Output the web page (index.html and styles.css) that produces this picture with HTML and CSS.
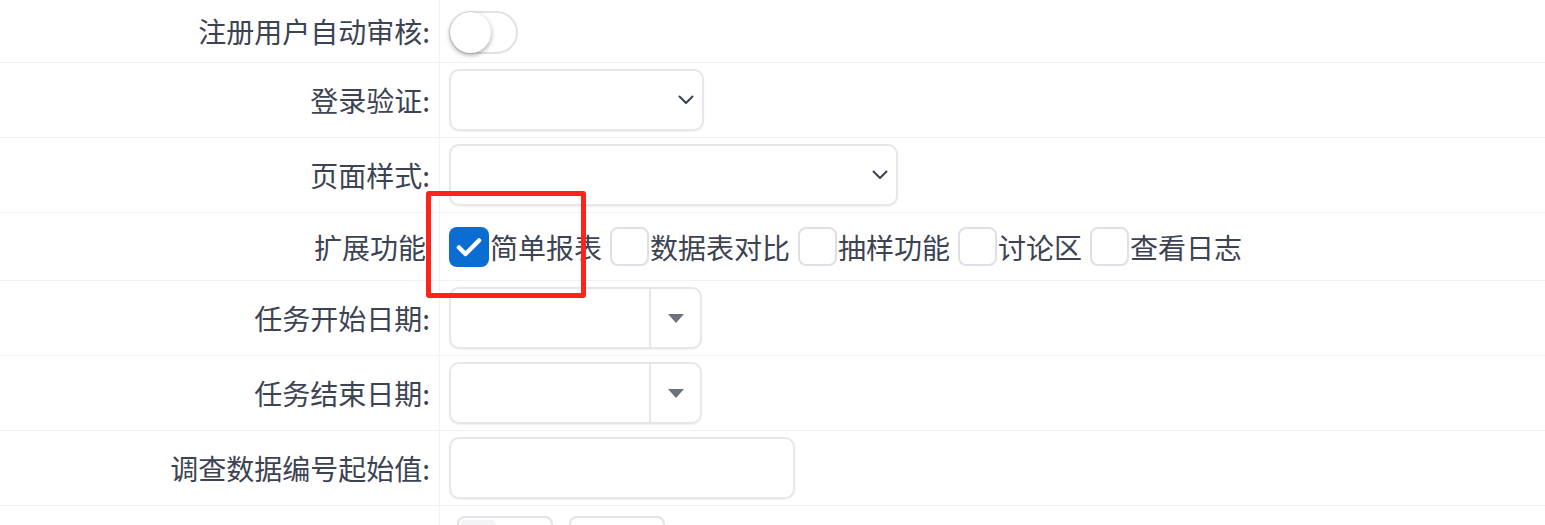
FILE: index.html
```html
<!DOCTYPE html>
<html lang="zh">
<head>
    <meta charset="UTF-8">
    <meta name="viewport" content="width=device-width, initial-scale=1.0">
    <title>设置</title>
    <link rel="stylesheet" href="styles.css">
</head>
<body>
    <div class="form">
        <div class="row row-first">
            <div class="label">注册用户自动审核:</div>
            <div class="field">
                <span class="switch"><span class="knob"></span></span>
            </div>
        </div>
        <div class="row">
            <div class="label">登录验证:</div>
            <div class="field">
                <div class="select select-sm">
                    <svg width="16" height="10" viewBox="0 0 16 10"><path d="M1.5 1.5 L8 8 L14.5 1.5" fill="none" stroke="#3a4150" stroke-width="2" stroke-linecap="round" stroke-linejoin="round"/></svg>
                </div>
            </div>
        </div>
        <div class="row">
            <div class="label">页面样式:</div>
            <div class="field">
                <div class="select select-lg">
                    <svg width="16" height="10" viewBox="0 0 16 10"><path d="M1.5 1.5 L8 8 L14.5 1.5" fill="none" stroke="#3a4150" stroke-width="2" stroke-linecap="round" stroke-linejoin="round"/></svg>
                </div>
            </div>
        </div>
        <div class="row row-check">
            <div class="label label-plain">扩展功能</div>
            <div class="field">
                <label class="check">
                    <span class="box is-checked">
                        <svg width="40" height="40" viewBox="0 0 40 40"><path d="M10 20.5 L16.5 27 L30 13.5" fill="none" stroke="#fff" stroke-width="4.5" stroke-linecap="round" stroke-linejoin="round"/></svg>
                    </span>简单报表
                </label>
                <label class="check"><span class="box"></span>数据表对比</label>
                <label class="check"><span class="box"></span>抽样功能</label>
                <label class="check"><span class="box"></span>讨论区</label>
                <label class="check"><span class="box"></span>查看日志</label>
            </div>
        </div>
        <div class="row">
            <div class="label">任务开始日期:</div>
            <div class="field">
                <div class="date">
                    <span class="date-text"></span>
                    <span class="date-btn"><span class="caret"></span></span>
                </div>
            </div>
        </div>
        <div class="row">
            <div class="label">任务结束日期:</div>
            <div class="field">
                <div class="date">
                    <span class="date-text"></span>
                    <span class="date-btn"><span class="caret"></span></span>
                </div>
            </div>
        </div>
        <div class="row">
            <div class="label">调查数据编号起始值:</div>
            <div class="field">
                <div class="text-input"></div>
            </div>
        </div>
        <div class="row row-last">
            <div class="label"></div>
            <div class="field">
                <span class="small-btn"><span class="swatch"></span></span>
                <span class="small-btn"></span>
            </div>
        </div>
    </div>
    <div class="mark"></div>
</body>
</html>
```

FILE: styles.css
```css
* {
    margin: 0;
    padding: 0;
    box-sizing: border-box;
}
body {
    background-color: #fff;
    font-family: "Noto Sans CJK SC", "Noto Sans", sans-serif;
    color: #3c4352;
    overflow: hidden;
}
.form {
    width: 100%;
}
.row {
    display: grid;
    grid-template-columns: 440px 1fr;
    border-bottom: 1px solid #f2f2f5;
}
.label {
    display: flex;
    align-items: center;
    justify-content: flex-end;
    padding-right: 9px;
    border-right: 1px solid #f2f2f5;
    font-size: 28px;
}
.label-plain {
    padding-right: 13px;
}
.field {
    display: flex;
    align-items: center;
    padding: 6px 9px;
    min-height: 74px;
}
.row-first .field {
    min-height: 62px;
    padding: 11px 9px 8px;
}
.row-check .field {
    min-height: 67px;
    padding: 0 9px;
}
.row-last .field {
    align-items: flex-start;
    padding: 10px 8px 0 17px;
    gap: 16px;
}

/* switch */
.switch {
    display: block;
    width: 69px;
    height: 43px;
    border: 2px solid #e1e1e6;
    border-radius: 22px;
    position: relative;
}
.knob {
    position: absolute;
    top: -1px;
    left: -1px;
    width: 41px;
    height: 41px;
    border-radius: 50%;
    background-color: #fff;
    box-shadow: 0 2px 5px rgba(0, 0, 0, 0.35);
}

/* select */
.select {
    height: 62px;
    border: 2px solid #e6e6eb;
    border-radius: 10px;
    box-shadow: 0 1px 2px rgba(0, 0, 0, 0.06);
    display: flex;
    align-items: center;
    justify-content: flex-end;
    padding-right: 8px;
}
.select-sm {
    width: 255px;
}
.select-lg {
    width: 449px;
}

/* checkboxes */
.check {
    display: flex;
    align-items: center;
    font-size: 28px;
    margin-right: 8px;
}
.box {
    display: block;
    width: 39px;
    height: 39px;
    border: 2px solid #dfdfe5;
    border-radius: 8px;
    margin-right: 1px;
    background-color: #fff;
}
.box.is-checked {
    border: none;
    background-color: #0b6dd2;
    width: 40px;
    height: 40px;
}
.box svg {
    display: block;
}

/* date */
.date {
    width: 253px;
    height: 62px;
    border: 2px solid #e6e6eb;
    border-radius: 10px;
    box-shadow: 0 1px 2px rgba(0, 0, 0, 0.06);
    display: flex;
}
.date-text {
    flex: 1;
    border-right: 2px solid #e6e6eb;
}
.date-btn {
    width: 49px;
    display: flex;
    align-items: center;
    justify-content: center;
}
.caret {
    width: 0;
    height: 0;
    border-left: 8px solid transparent;
    border-right: 8px solid transparent;
    border-top: 9px solid #6b717d;
}

/* text */
.text-input {
    width: 346px;
    height: 62px;
    border: 2px solid #e6e6eb;
    border-radius: 10px;
    box-shadow: 0 1px 2px rgba(0, 0, 0, 0.06);
}
.small-btn {
    display: block;
    width: 96px;
    height: 40px;
    border: 2px solid #e3e3e8;
    border-radius: 8px;
    padding: 2px;
}
.swatch {
    display: block;
    width: 35px;
    height: 12px;
    background-color: #f4f4f6;
    border-radius: 4px;
}

/* annotation */
.mark {
    position: absolute;
    left: 426px;
    top: 191px;
    width: 160px;
    height: 107px;
    border: 5px solid #ff2419;
    border-radius: 3px;
}
```
